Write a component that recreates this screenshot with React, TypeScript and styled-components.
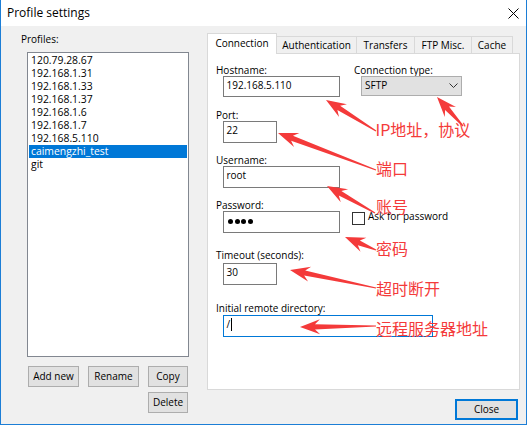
import React from "react";
import styled, { createGlobalStyle } from "styled-components";

const UI_FONT = `"Open Sans", "Noto Sans", "Liberation Sans", sans-serif`;
const RED = "#f43a3a";

const GlobalStyle = createGlobalStyle`
  html, body { margin: 0; padding: 0; background: #ffffff; }
  body { font-family: ${UI_FONT}; color: #000; }
  *, *::before, *::after { box-sizing: border-box; }
`;

const Window = styled.div`
  position: relative;
  width: 527px;
  height: 425px;
  display: flex;
  flex-direction: column;
  background: #f0f0f0;
  border: 1px solid #1c7ed6;
  border-top: none;
  font-family: ${UI_FONT};
  font-size: 10px;
  color: #000;
`;

const TitleBar = styled.div`
  flex: 0 0 26px;
  display: flex;
  align-items: center;
  justify-content: space-between;
  padding: 0 7px 0 6px;
  background: #fff;
`;

const Title = styled.span`
  font-size: 12px;
  line-height: 26px;
`;

const CloseGlyph = styled.svg`
  display: block;
`;

const Body = styled.div`
  flex: 1;
  display: grid;
  grid-template-columns: 168px 313px;
  column-gap: 18px;
  align-items: start;
  padding: 7px 0 0 20px;
`;

const Column = styled.div`
  display: flex;
  flex-direction: column;
`;

const SectionLabel = styled.div`
  height: 12px;
  line-height: 12px;
`;

const ListBox = styled.div`
  margin: 7px 0 0 6px;
  width: 162px;
  height: 305px;
  padding: 1px;
  background: #fff;
  border: 1px solid #828790;
`;

const ListItem = styled.div<{ $selected?: boolean }>`
  height: 13px;
  line-height: 13px;
  padding-left: 2px;
  font-size: 10.4px;
  white-space: nowrap;
  background: ${(p) => (p.$selected ? "#0078d7" : "transparent")};
  color: ${(p) => (p.$selected ? "#fff" : "#000")};
`;

const ButtonGrid = styled.div`
  display: grid;
  grid-template-columns: 51px 51px 40px;
  column-gap: 9px;
  row-gap: 5px;
  margin: 9px 0 0 7px;
`;

const Button = styled.button<{ $col?: number; $primary?: boolean; $w?: number }>`
  grid-column: ${(p) => p.$col ?? "auto"};
  width: ${(p) => (p.$w ? `${p.$w}px` : "auto")};
  height: 21px;
  padding: 0;
  font-family: ${UI_FONT};
  font-size: 10px;
  line-height: ${(p) => (p.$primary ? 17 : 19)}px;
  color: #000;
  text-align: center;
  background: #e1e1e1;
  border: ${(p) => (p.$primary ? "2px solid #0078d7" : "1px solid #adadad")};
  border-radius: 0;
`;

const TabStrip = styled.div`
  display: flex;
  align-items: flex-end;
  height: 20px;
`;

const Tab = styled.div<{ $w: number; $active?: boolean }>`
  position: relative;
  z-index: ${(p) => (p.$active ? 2 : 1)};
  flex: 0 0 ${(p) => p.$w}px;
  height: ${(p) => (p.$active ? 21 : 17)}px;
  margin-bottom: ${(p) => (p.$active ? -1 : 0)}px;
  padding-top: ${(p) => (p.$active ? 1.5 : 1)}px;
  border: 1px solid #d9d9d9;
  border-bottom: none;
  background: ${(p) => (p.$active ? "#fff" : "#f0f0f0")};
  line-height: 14px;
  text-align: center;
  white-space: nowrap;

  & + & {
    margin-left: -1px;
  }
`;

const Panel = styled.div`
  position: relative;
  z-index: 1;
  height: 337px;
  padding: 10px 8px 0 8px;
  background: #fff;
  border: 1px solid #d9d9d9;
`;

const FieldRow = styled.div<{ $mt?: number }>`
  display: flex;
  align-items: flex-start;
  margin-top: ${(p) => p.$mt ?? 0}px;
`;

const Field = styled.div<{ $ml?: number }>`
  display: flex;
  flex-direction: column;
  margin-left: ${(p) => p.$ml ?? 0}px;
`;

const FieldLabel = styled.div<{ $mb?: number }>`
  height: 12px;
  line-height: 12px;
  margin-bottom: ${(p) => p.$mb ?? 0}px;
  white-space: nowrap;
`;

const TextBox = styled.div<{ $w: number; $h?: number; $focused?: boolean }>`
  display: flex;
  align-items: flex-start;
  margin-left: 7px;
  width: ${(p) => p.$w}px;
  height: ${(p) => p.$h ?? 22}px;
  padding: 1px 3px 0 2.5px;
  line-height: 14px;
  white-space: nowrap;
  background: #fff;
  border: 1px solid ${(p) => (p.$focused ? "#0078d7" : "#7a7a7a")};
`;

const Caret = styled.span`
  display: block;
  width: 1px;
  height: 13px;
  margin: 1px 0 0 1px;
  background: #000;
`;

const Dots = styled.div`
  display: flex;
  gap: 1.5px;
  margin: 6px 0 0 1.5px;
`;

const Dot = styled.span`
  display: block;
  width: 5px;
  height: 5px;
  border-radius: 50%;
  background: #000;
`;

const Select = styled.div`
  display: flex;
  align-items: flex-start;
  justify-content: space-between;
  margin-left: 7px;
  width: 101px;
  height: 20px;
  padding: 1px 3px 0 3px;
  line-height: 14px;
  background: #e1e1e1;
  border: 1px solid #adadad;
`;

const Chevron = styled.svg`
  display: block;
  margin-top: 5px;
`;

const CheckRow = styled.div<{ $mt?: number }>`
  display: flex;
  align-items: flex-start;
  gap: 3px;
  margin: ${(p) => p.$mt ?? 0}px 0 0 12px;
`;

const CheckBox = styled.span`
  display: block;
  width: 13px;
  height: 13px;
  background: #fff;
  border: 1px solid #333;
`;

const CheckText = styled.span`
  margin-top: -2px;
  line-height: 13px;
  white-space: nowrap;
`;

const Footer = styled.div`
  display: flex;
  justify-content: flex-end;
  margin-top: 9px;
  padding-right: 2px;
`;

const Overlay = styled.div`
  position: absolute;
  left: -1px;
  top: 0;
  width: 531px;
  height: 426px;
  z-index: 5;
  pointer-events: none;
`;

const ArrowLayer = styled.svg`
  position: absolute;
  left: 0;
  top: 0;
`;

const Note = styled.span<{ $x: number; $y: number }>`
  position: absolute;
  left: ${(p) => p.$x}px;
  top: ${(p) => p.$y}px;
  font-family: "Noto Sans CJK SC", "Noto Sans", sans-serif;
  font-size: 16px;
  line-height: 16px;
  color: ${RED};
  white-space: nowrap;
`;

const profiles = [
  "120.79.28.67",
  "192.168.1.31",
  "192.168.1.33",
  "192.168.1.37",
  "192.168.1.6",
  "192.168.1.7",
  "192.168.5.110",
  "caimengzhi_test",
  "git",
];

const tabs: { label: string; w: number; active?: boolean }[] = [
  { label: "Connection", w: 70, active: true },
  { label: "Authentication", w: 81 },
  { label: "Transfers", w: 59 },
  { label: "FTP Misc.", w: 58 },
  { label: "Cache", w: 42 },
];

const arrows: [number, number, number, number][] = [
  [376, 131, 326, 100],
  [463, 126, 437, 97],
  [376, 170, 278, 133],
  [375, 213, 327, 186],
  [376, 250, 345, 237],
  [376, 288, 290, 270],
  [376, 326, 300, 327],
];

const notes: { text: string; x: number; y: number }[] = [
  { text: "IP地址，协议", x: 375.5, y: 121 },
  { text: "端口", x: 376, y: 159.5 },
  { text: "账号", x: 376, y: 198 },
  { text: "密码", x: 376, y: 239.5 },
  { text: "超时断开", x: 376, y: 279.5 },
  { text: "远程服务器地址", x: 376, y: 319.5 },
];

function arrowPoints(x1: number, y1: number, x2: number, y2: number): string {
  const dx = x2 - x1;
  const dy = y2 - y1;
  const len = Math.hypot(dx, dy);
  const ux = dx / len;
  const uy = dy / len;
  const nx = -uy;
  const ny = ux;
  const headLen = 20;
  const headHalf = 7.5;
  const shaftHalf = 2.6;
  const tailHalf = 0.6;
  const bx = x2 - ux * (headLen - 5);
  const by = y2 - uy * (headLen - 5);
  const wx = x2 - ux * headLen;
  const wy = y2 - uy * headLen;
  const pts = [
    [x1 + nx * tailHalf, y1 + ny * tailHalf],
    [bx + nx * shaftHalf, by + ny * shaftHalf],
    [wx + nx * headHalf, wy + ny * headHalf],
    [x2, y2],
    [wx - nx * headHalf, wy - ny * headHalf],
    [bx - nx * shaftHalf, by - ny * shaftHalf],
    [x1 - nx * tailHalf, y1 - ny * tailHalf],
  ];
  return pts.map(([a, b]) => `${a.toFixed(2)},${b.toFixed(2)}`).join(" ");
}

export default function App() {
  return (
    <>
      <GlobalStyle />
      <Window>
        <TitleBar>
          <Title>Profile settings</Title>
          <CloseGlyph width="11" height="11" viewBox="0 0 11 11">
            <path d="M0.5 0.5 L10.5 10.5 M10.5 0.5 L0.5 10.5" stroke="#000" strokeWidth="1" fill="none" />
          </CloseGlyph>
        </TitleBar>
        <Body>
          <Column>
            <SectionLabel>Profiles:</SectionLabel>
            <ListBox>
              {profiles.map((p) => (
                <ListItem key={p} $selected={p === "caimengzhi_test"}>
                  {p}
                </ListItem>
              ))}
            </ListBox>
            <ButtonGrid>
              <Button>Add new</Button>
              <Button>Rename</Button>
              <Button>Copy</Button>
              <Button $col={3}>Delete</Button>
            </ButtonGrid>
          </Column>
          <Column>
            <TabStrip>
              {tabs.map((t) => (
                <Tab key={t.label} $w={t.w} $active={t.active}>
                  {t.label}
                </Tab>
              ))}
            </TabStrip>
            <Panel>
              <FieldRow>
                <Field>
                  <FieldLabel>Hostname:</FieldLabel>
                  <TextBox $w={117} $h={21}>192.168.5.110</TextBox>
                </Field>
                <Field $ml={14}>
                  <FieldLabel>Connection type:</FieldLabel>
                  <Select>
                    <span>SFTP</span>
                    <Chevron width="9" height="5" viewBox="0 0 9 5">
                      <path d="M0.5 0.5 L4.5 4.5 L8.5 0.5" stroke="#333" strokeWidth="1" fill="none" />
                    </Chevron>
                  </Select>
                </Field>
              </FieldRow>
              <FieldRow $mt={12}>
                <Field>
                  <FieldLabel>Port:</FieldLabel>
                  <TextBox $w={54}>22</TextBox>
                </Field>
              </FieldRow>
              <FieldRow $mt={11}>
                <Field>
                  <FieldLabel>Username:</FieldLabel>
                  <TextBox $w={117}>root</TextBox>
                </Field>
              </FieldRow>
              <FieldRow $mt={11}>
                <Field>
                  <FieldLabel>Password:</FieldLabel>
                  <TextBox $w={117}>
                    <Dots>
                      <Dot />
                      <Dot />
                      <Dot />
                      <Dot />
                    </Dots>
                  </TextBox>
                </Field>
                <CheckRow $mt={13}>
                  <CheckBox />
                  <CheckText>Ask for password</CheckText>
                </CheckRow>
              </FieldRow>
              <FieldRow $mt={16}>
                <Field>
                  <FieldLabel $mb={2}>Timeout (seconds):</FieldLabel>
                  <TextBox $w={54}>30</TextBox>
                </Field>
              </FieldRow>
              <FieldRow $mt={17}>
                <Field>
                  <FieldLabel $mb={1}>Initial remote directory:</FieldLabel>
                  <TextBox $w={210} $focused>
                    /<Caret />
                  </TextBox>
                </Field>
              </FieldRow>
            </Panel>
            <Footer>
              <Button $primary $w={63}>Close</Button>
            </Footer>
          </Column>
        </Body>
        <Overlay>
          <ArrowLayer width="531" height="426" viewBox="0 0 531 426">
            {arrows.map(([a, b, c, d], i) => (
              <polygon key={i} points={arrowPoints(a, b, c, d)} fill={RED} />
            ))}
          </ArrowLayer>
          {notes.map((n) => (
            <Note key={n.text} $x={n.x} $y={n.y}>
              {n.text}
            </Note>
          ))}
        </Overlay>
      </Window>
    </>
  );
}
